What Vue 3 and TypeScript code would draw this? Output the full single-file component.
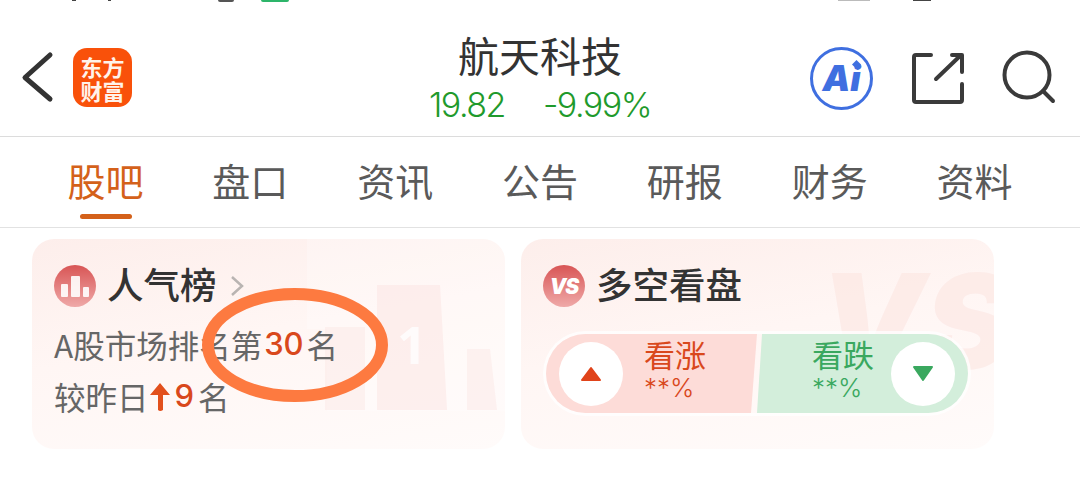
<template>
  <div class="page">
    <div class="status">
      <i class="mark m1"></i><i class="mark m2"></i><i class="mark m3"></i>
      <i class="pill-mark"></i><i class="mark m4"></i><i class="mark m5"></i>
    </div>

    <header class="top">
      <div class="top-left">
        <svg class="back" width="36" height="56" viewBox="0 0 36 56">
          <path d="M30 5 L5 27.5 L30 49" fill="none" stroke="#333" stroke-width="5" stroke-linecap="round" stroke-linejoin="round" />
        </svg>
        <div class="logo"><span>东方</span><span>财富</span></div>
      </div>
      <div class="top-title">
        <h1>航天科技</h1>
        <p><span>19.82</span><span>-9.99%</span></p>
      </div>
      <div class="top-right">
        <div class="ai">
          <span>Ai</span>
          <svg class="spark" width="9" height="9" viewBox="0 0 10 10"><path d="M5 0 L10 5 L5 10 L0 5 Z" fill="#3f6fe0" /></svg>
        </div>
        <svg class="share" width="52" height="52" viewBox="0 0 52 52">
          <path d="M19 3 H4 Q2 3 2 5 V48 Q2 50 4 50 H48 Q50 50 50 48 V32" fill="none" stroke="#3a3a3a" stroke-width="4" stroke-linecap="round" />
          <path d="M24 27 L49 3 M40 3 H50 V20" fill="none" stroke="#3a3a3a" stroke-width="4" stroke-linecap="round" stroke-linejoin="round" />
        </svg>
        <svg class="search" width="56" height="56" viewBox="0 0 56 56">
          <circle cx="26" cy="25" r="22.5" fill="none" stroke="#3a3a3a" stroke-width="4" />
          <path d="M42 41 L52 51" stroke="#3a3a3a" stroke-width="4" stroke-linecap="round" />
        </svg>
      </div>
    </header>

    <nav class="tabs">
      <div v-for="(t, i) in tabs" :key="t" class="tab" :class="{ active: i === 0 }">{{ t }}</div>
    </nav>

    <section class="cards">
      <div class="card">
        <svg class="wm" width="473" height="210" viewBox="0 0 473 210">
          <path d="M275 0 H473 V172 H295 V90 H275 Z" fill="#fff" opacity=".25" />
          <path d="M293 171 V88 H333 V171 Z" fill="#fbe4e1" opacity=".4" />
          <path d="M345 171 V46 H408 L415 171 Z" fill="#fbe4e1" opacity=".5" />
          <path d="M435 171 V110 H458 L465 171 Z" fill="#fbe4e1" opacity=".4" />
        </svg>
        <span class="wm-one">1</span>
        <div class="card-head">
          <div class="badge">
            <svg width="30" height="24" viewBox="0 0 30 24">
              <rect x="1" y="10" width="7" height="13" rx="1" fill="#fff" opacity=".9" />
              <rect x="11" y="2" width="9" height="21" rx="1" fill="#fff" opacity=".9" />
              <rect x="23" y="13" width="6" height="10" rx="1" fill="#fff" opacity=".9" />
            </svg>
          </div>
          <h2>人气榜</h2>
          <svg class="more" width="14" height="22" viewBox="0 0 14 22">
            <path d="M2 2 L12 11 L2 20" fill="none" stroke="#b9b4b2" stroke-width="2.5" />
          </svg>
        </div>
        <p class="rank-line">A股市场排名第<b>30</b><span class="tail">名</span></p>
        <p class="rank-line second">
          较昨日<svg class="up" width="22" height="30" viewBox="0 0 22 30"><path d="M11 1 L21 13 H14 V28 Q11 30 9 28 V13 H1 Z" fill="#e2501c" /></svg><b class="nine">9</b><span>名</span>
        </p>
      </div>

      <div class="card">
        <span class="wm-vs">VS</span>
        <div class="card-head">
          <div class="badge"><span class="vs">VS</span></div>
          <h2>多空看盘</h2>
        </div>
        <div class="vote">
          <div class="side bull">
            <div class="dot"><svg width="22" height="16" viewBox="0 0 22 16"><path d="M11 2 L20 14 H2 Z" fill="#e0431a" stroke="#e0431a" stroke-width="2" stroke-linejoin="round" /></svg></div>
            <div class="side-text"><strong>看涨</strong><em>**%</em></div>
          </div>
          <div class="side bear">
            <div class="side-text"><strong>看跌</strong><em>**%</em></div>
            <div class="dot"><svg width="22" height="18" viewBox="0 0 22 18"><path d="M2 2 H20 L11 15 Z" fill="#3aa85f" stroke="#3aa85f" stroke-width="2" stroke-linejoin="round" /></svg></div>
          </div>
        </div>
      </div>
    </section>

    <!-- hand-drawn circle on the screenshot -->
    <svg class="scribble" width="210" height="130" viewBox="0 0 210 130">
      <ellipse cx="105" cy="65" rx="87" ry="51" fill="none" stroke="#fd7a40" stroke-width="12" />
    </svg>
  </div>
</template>

<script setup lang="ts">
const tabs: string[] = ['股吧', '盘口', '资讯', '公告', '研报', '财务', '资料']
</script>

<style>
html, body { margin: 0; background: #fff; }
</style>

<style scoped>
.page {
  position: relative;
  width: 1080px;
  height: 486px;
  overflow: hidden;
  background: #fff;
  font-family: "Noto Sans CJK SC", "Noto Sans", sans-serif;
  color: #333;
}

.status {
  position: absolute;
  top: 0;
  left: 0;
  width: 100%;
  height: 3px;
}
.mark { position: absolute; top: 0; height: 1px; background: #444; }
.m1 { left: 72px; width: 4px; }
.m2 { left: 108px; width: 3px; }
.m3 { left: 218px; width: 16px; height: 2px; background: #555; border-radius: 0 0 8px 8px; }
.m4 { left: 838px; width: 32px; background: #bbb; }
.m5 { left: 913px; width: 18px; background: #444; }
.pill-mark { position: absolute; top: 0; left: 261px; width: 28px; height: 2px; background: #2db56a; border-radius: 0 0 6px 6px; }

.top {
  display: grid;
  grid-template-columns: 1fr auto 1fr;
  align-items: center;
  box-sizing: border-box;
  border-bottom: 1px solid #dcdcdc;
  height: 137px;
}
.top-left {
  display: flex;
  align-items: center;
  padding-left: 20px;
  margin-top: 19px;
}
.back { margin-right: 17px; }
.logo {
  width: 59px;
  height: 59px;
  border-radius: 14px;
  background: #f9510a;
  color: #fff3ea;
  display: flex;
  flex-direction: column;
  align-items: center;
  justify-content: center;
  font-size: 22px;
  font-weight: 700;
  line-height: 24px;
}
.top-title { text-align: center; margin-top: 17px; }
.top-title h1 {
  margin: 0;
  font-size: 41px;
  font-weight: 400;
  line-height: 50px;
  color: #333;
}
.top-title p {
  margin: 7px 0 0;
  display: flex;
  justify-content: center;
  gap: 38px;
  font-family: Inter, "Noto Sans", sans-serif;
  font-weight: 300;
  font-size: 34px;
  line-height: 38px;
  letter-spacing: -1.5px;
  color: #1f9a2c;
}

.top-right {
  display: flex;
  justify-content: flex-end;
  align-items: center;
  padding-right: 23px;
  margin-top: 20px;
}
.ai {
  position: relative;
  width: 63px;
  height: 63px;
  box-sizing: border-box;
  border: 3.5px solid #3f6fe0;
  border-radius: 50%;
  display: flex;
  align-items: center;
  justify-content: center;
  color: #3f6fe0;
  font-family: Inter, sans-serif;
  font-weight: 900;
  font-style: italic;
  font-size: 35px;
  line-height: 40px;
  margin-right: 39px;
}
.spark { position: absolute; top: 10px; right: 9px; }
.share { margin-right: 37px; }

.tabs {
  height: 90px;
  display: flex;
  padding: 0 33px;
  border-bottom: 1px solid #e2e2e2;
}
.tab {
  flex: 1;
  position: relative;
  text-align: center;
  font-size: 38px;
  line-height: 86px;
  color: #5a5a5a;
}
.tab.active { color: #d4611a; }
.tab.active::after {
  content: "";
  position: absolute;
  left: 47px;
  bottom: 8px;
  width: 52px;
  height: 5px;
  border-radius: 3px;
  background: #d4611a;
}

.cards {
  display: flex;
  gap: 16px;
  padding: 11px 0 0 32px;
}
.card {
  position: relative;
  overflow: hidden;
  width: 473px;
  height: 210px;
  box-sizing: border-box;
  border-radius: 22px;
  padding: 26px 0 0 22px;
  background: linear-gradient(170deg, #fdeeeb 0%, #fff6f4 45%, #fffbfa 100%);
}
.wm { position: absolute; left: 0; top: 0; }
.wm-one {
  position: absolute;
  left: 365px;
  top: 70px;
  font: 700 52px/70px "Noto Sans", sans-serif;
  color: #fff;
  opacity: .8;
}
.wm-vs {
  position: absolute;
  left: 298px;
  top: -18px;
  font: italic 900 132px/200px Inter, sans-serif;
  color: #fbe3df;
  opacity: .55;
}
.card-head {
  position: relative;
  display: flex;
  align-items: center;
  height: 42px;
}
.badge {
  width: 42px;
  height: 42px;
  border-radius: 50%;
  background: linear-gradient(180deg, #d85555 0%, #efa9a8 100%);
  display: flex;
  align-items: center;
  justify-content: center;
  margin-right: 11px;
}
.vs {
  color: #fff;
  font: italic 900 21px/1 Inter, sans-serif;
  letter-spacing: -1px;
}
.card-head h2 {
  margin: -4px 0 0;
  font-size: 36.5px;
  font-weight: 500;
  line-height: 42px;
  color: #333;
}
.more { margin-left: 13px; }

.rank-line {
  position: relative;
  margin: 15px 0 0;
  display: flex;
  align-items: center;
  font-size: 31.5px;
  line-height: 44px;
  color: #666;
}
.rank-line b {
  font-family: Inter, sans-serif;
  font-weight: 500;
  color: #d9481c;
  font-size: 31px;
  margin-left: 2px;
}
.tail { margin-left: 3px; }
.second { margin-top: 8px; }
.up { margin: 2px 2px 0 0; }
.rank-line .nine { margin: 0 4px 0 2px; }

.vote {
  position: relative;
  display: flex;
  width: 422px;
  height: 79px;
  margin: 27px 0 0 3px;
  border-radius: 40px;
  box-shadow: 0 0 0 3px rgba(255, 255, 255, .75);
  overflow: hidden;
}
.side {
  flex: 0 0 211px;
  box-sizing: border-box;
  display: flex;
  align-items: center;
}
.bull {
  background: #fddcd8;
  color: #d9481c;
  padding-left: 13px;
  gap: 21px;
  clip-path: polygon(0 0, 100% 0, calc(100% - 6px) 100%, 0 100%);
}
.bear {
  background: #d3eedb;
  color: #3aa85f;
  padding-left: 55px;
  padding-right: 13px;
  justify-content: space-between;
  clip-path: polygon(5px 0, 100% 0, 100% 100%, 0 100%);
}
.dot {
  width: 64px;
  height: 64px;
  border-radius: 50%;
  background: #fff;
  display: flex;
  align-items: center;
  justify-content: center;
}
.side-text {
  display: flex;
  flex-direction: column;
  margin-top: -10px;
}
.side-text strong {
  font-weight: 400;
  font-size: 31px;
  line-height: 38px;
}
.side-text em {
  font-style: normal;
  font-family: Inter, "Noto Sans", sans-serif;
  font-weight: 300;
  font-size: 26px;
  line-height: 30px;
}

.scribble {
  position: absolute;
  left: 190px;
  top: 280px;
}
</style>
